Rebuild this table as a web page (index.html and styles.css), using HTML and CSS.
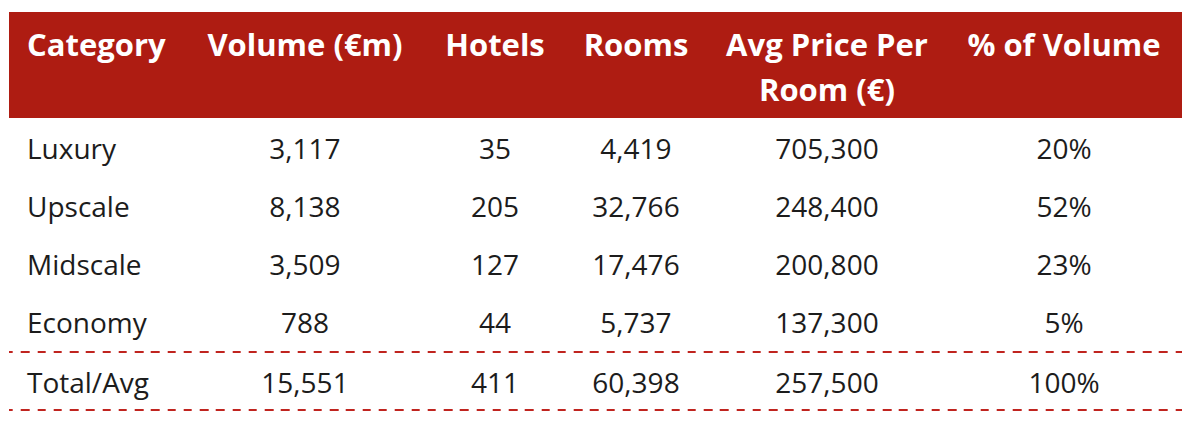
FILE: index.html
```html
<!DOCTYPE html>
<html lang="en">
<head>
<meta charset="utf-8">
<title>Hotel transactions by category</title>
<link rel="stylesheet" href="styles.css">
</head>
<body>
<div class="table">
  <div class="row head">
    <div class="cell first">Category</div>
    <div class="cell">Volume (€m)</div>
    <div class="cell">Hotels</div>
    <div class="cell">Rooms</div>
    <div class="cell">Avg Price Per Room (€)</div>
    <div class="cell">% of Volume</div>
  </div>
  <div class="body">
    <div class="row data">
      <div class="cell first">Luxury</div>
      <div class="cell">3,117</div>
      <div class="cell">35</div>
      <div class="cell">4,419</div>
      <div class="cell">705,300</div>
      <div class="cell">20%</div>
    </div>
    <div class="row data">
      <div class="cell first">Upscale</div>
      <div class="cell">8,138</div>
      <div class="cell">205</div>
      <div class="cell">32,766</div>
      <div class="cell">248,400</div>
      <div class="cell">52%</div>
    </div>
    <div class="row data">
      <div class="cell first">Midscale</div>
      <div class="cell">3,509</div>
      <div class="cell">127</div>
      <div class="cell">17,476</div>
      <div class="cell">200,800</div>
      <div class="cell">23%</div>
    </div>
    <div class="row data">
      <div class="cell first">Economy</div>
      <div class="cell">788</div>
      <div class="cell">44</div>
      <div class="cell">5,737</div>
      <div class="cell">137,300</div>
      <div class="cell">5%</div>
    </div>
  </div>
  <div class="dash"></div>
  <div class="row data total">
    <div class="cell first">Total/Avg</div>
    <div class="cell">15,551</div>
    <div class="cell">411</div>
    <div class="cell">60,398</div>
    <div class="cell">257,500</div>
    <div class="cell">100%</div>
  </div>
  <div class="dash"></div>
</div>
</body>
</html>
```
FILE: styles.css
```css
html, body {
  margin: 0;
  padding: 0;
  background: #ffffff;
}

body {
  font-family: "Open Sans", "Noto Sans", sans-serif;
  color: #1c1c1c;
}

.table {
  width: 1173px;
  margin: 12px 0 0 9px;
}

.row {
  display: grid;
  grid-template-columns: 175px 242px 138px 144px 238px 236px;
}

.cell {
  text-align: center;
  font-size: 28px;
}

.cell.first {
  text-align: left;
  padding-left: 18px;
}

.head {
  background: #ae1c12;
  color: #ffffff;
  height: 106px;
  box-sizing: border-box;
  padding: 10px 0 6px;
  align-items: start;
}

.head .cell {
  font-size: 31px;
  font-weight: 700;
  line-height: 45px;
}

.head .cell:nth-child(5) {
  padding: 0 14px;
}

.body {
  padding-bottom: 1px;
}

.data {
  height: 58px;
  align-items: center;
}

.data .cell {
  line-height: 38px;
  padding-top: 2px;
}

.total {
  height: 56px;
}

.dash {
  height: 2px;
  background-image: repeating-linear-gradient(to right, #c0241f 0, #c0241f 8.5px, transparent 8.5px, transparent 16.26px);
  background-position: -4.3px 0;
}
```
